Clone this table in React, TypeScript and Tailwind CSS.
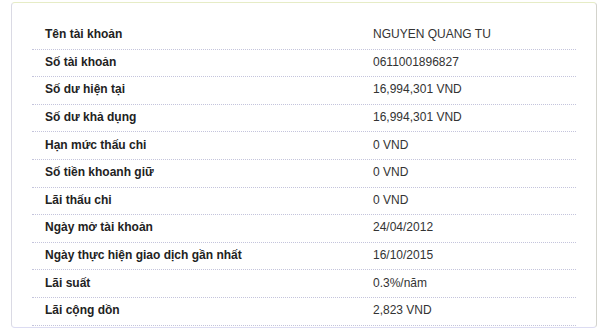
const rows: [string, string][] = [
  ["Tên tài khoản", "NGUYEN QUANG TU"],
  ["Số tài khoản", "0611001896827"],
  ["Số dư hiện tại", "16,994,301 VND"],
  ["Số dư khả dụng", "16,994,301 VND"],
  ["Hạn mức thấu chi", "0 VND"],
  ["Số tiền khoanh giữ", "0 VND"],
  ["Lãi thấu chi", "0 VND"],
  ["Ngày mở tài khoản", "24/04/2012"],
  ["Ngày thực hiện giao dịch gần nhất", "16/10/2015"],
  ["Lãi suất", "0.3%/năm"],
  ["Lãi cộng dồn", "2,823 VND"],
];

export default function App() {
  return (
    <div className="w-[601px] h-[329px] bg-white pt-[2px] pl-[11px] pr-[4px] font-['Liberation_Sans',Arial,sans-serif] text-[12px]">
      <div className="h-[326px] rounded-[4px] border border-t-[#e6ecc6] border-r-[#d3d3cc] border-b-[#dcdcf2] border-l-[#dadae4] pt-[19px] px-[20px]">
        <div className="flex flex-col">
          {rows.map(([label, value]) => (
            <div
              key={label}
              className="flex items-center h-[27.6px] pb-[2px] border-b border-dotted border-[#c4c4dc]"
            >
              <div className="w-[328px] pl-[13px] font-bold text-[#222]">{label}</div>
              <div className="pl-[13px] text-[#333]">{value}</div>
            </div>
          ))}
        </div>
      </div>
    </div>
  );
}
